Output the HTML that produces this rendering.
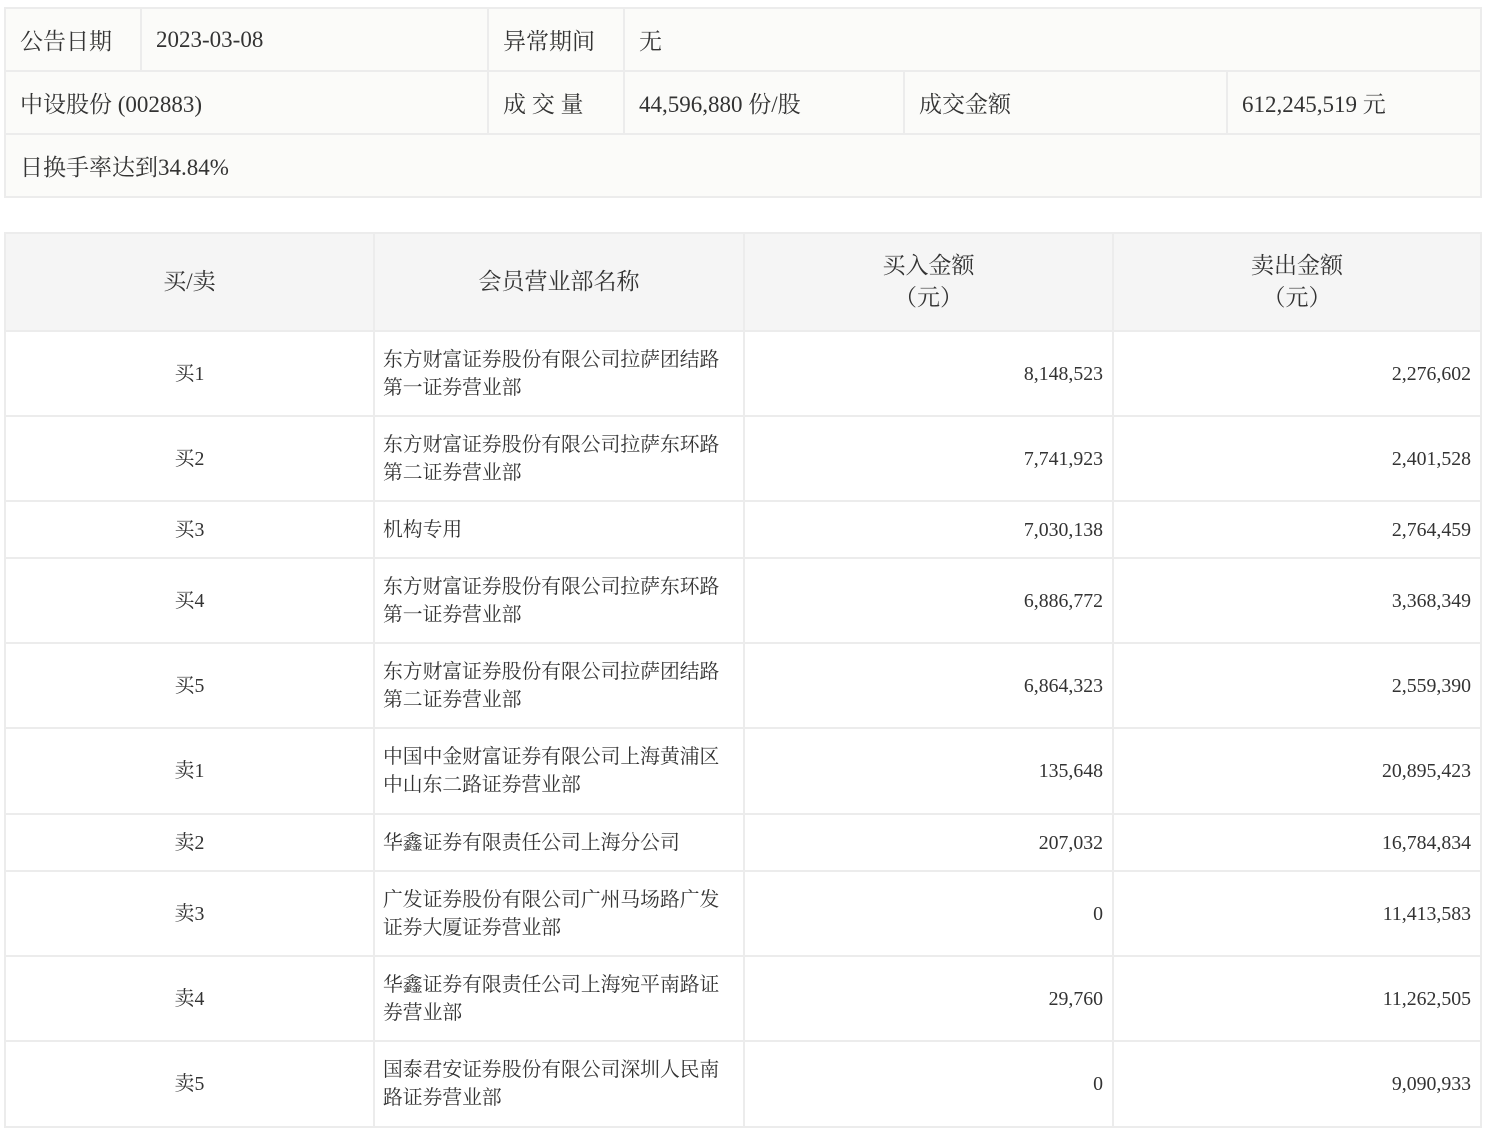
<!DOCTYPE html>
<html><head><meta charset="utf-8"><style>
body{margin:0;background:#fff;font-family:"Liberation Serif","Noto Serif CJK SC",serif;color:#333;}
table{border-collapse:collapse;position:absolute;left:4px;table-layout:fixed;}
td{border:2px solid #ececec;padding:0;}
#t1{top:7px;width:1478px;background:#fbfbf9;font-size:23px;}
#t1 td{height:61px;padding-left:14px;}
#t2{top:232px;width:1478px;font-size:19.8px;line-height:28px;}
#t2 th{background:#f5f5f5;border:2px solid #ececec;font-weight:normal;font-size:23px;line-height:32px;height:94px;}
#t2 td.c{text-align:center;}
#t2 td.n{padding-left:8px;}
#t2 td.r{text-align:right;padding-right:9px;}
</style></head><body>
<table id="t1">
<col style="width:136px"><col style="width:347px"><col style="width:136px"><col style="width:280px"><col style="width:323px"><col>
<tr><td>公告日期</td><td>2023-03-08</td><td>异常期间</td><td colspan="3">无</td></tr>
<tr><td colspan="2">中设股份 (002883)</td><td>成 交 量</td><td>44,596,880 份/股</td><td>成交金额</td><td>612,245,519 元</td></tr>
<tr><td colspan="6">日换手率达到34.84%</td></tr>
</table>
<table id="t2">
<col style="width:369px"><col style="width:370px"><col style="width:369px"><col>
<tr><th>买/卖</th><th>会员营业部名称</th><th>买入金额<br>（元）</th><th>卖出金额<br>（元）</th></tr>
<tr style="height:85px"><td class="c">买1</td><td class="n">东方财富证券股份有限公司拉萨团结路<br>第一证券营业部</td><td class="r">8,148,523</td><td class="r">2,276,602</td></tr>
<tr style="height:85px"><td class="c">买2</td><td class="n">东方财富证券股份有限公司拉萨东环路<br>第二证券营业部</td><td class="r">7,741,923</td><td class="r">2,401,528</td></tr>
<tr style="height:57px"><td class="c">买3</td><td class="n">机构专用</td><td class="r">7,030,138</td><td class="r">2,764,459</td></tr>
<tr style="height:85px"><td class="c">买4</td><td class="n">东方财富证券股份有限公司拉萨东环路<br>第一证券营业部</td><td class="r">6,886,772</td><td class="r">3,368,349</td></tr>
<tr style="height:85px"><td class="c">买5</td><td class="n">东方财富证券股份有限公司拉萨团结路<br>第二证券营业部</td><td class="r">6,864,323</td><td class="r">2,559,390</td></tr>
<tr style="height:86px"><td class="c">卖1</td><td class="n">中国中金财富证券有限公司上海黄浦区<br>中山东二路证券营业部</td><td class="r">135,648</td><td class="r">20,895,423</td></tr>
<tr style="height:57px"><td class="c">卖2</td><td class="n">华鑫证券有限责任公司上海分公司</td><td class="r">207,032</td><td class="r">16,784,834</td></tr>
<tr style="height:85px"><td class="c">卖3</td><td class="n">广发证券股份有限公司广州马场路广发<br>证券大厦证券营业部</td><td class="r">0</td><td class="r">11,413,583</td></tr>
<tr style="height:85px"><td class="c">卖4</td><td class="n">华鑫证券有限责任公司上海宛平南路证<br>券营业部</td><td class="r">29,760</td><td class="r">11,262,505</td></tr>
<tr style="height:86px"><td class="c">卖5</td><td class="n">国泰君安证券股份有限公司深圳人民南<br>路证券营业部</td><td class="r">0</td><td class="r">9,090,933</td></tr>
</table>
</body></html>
